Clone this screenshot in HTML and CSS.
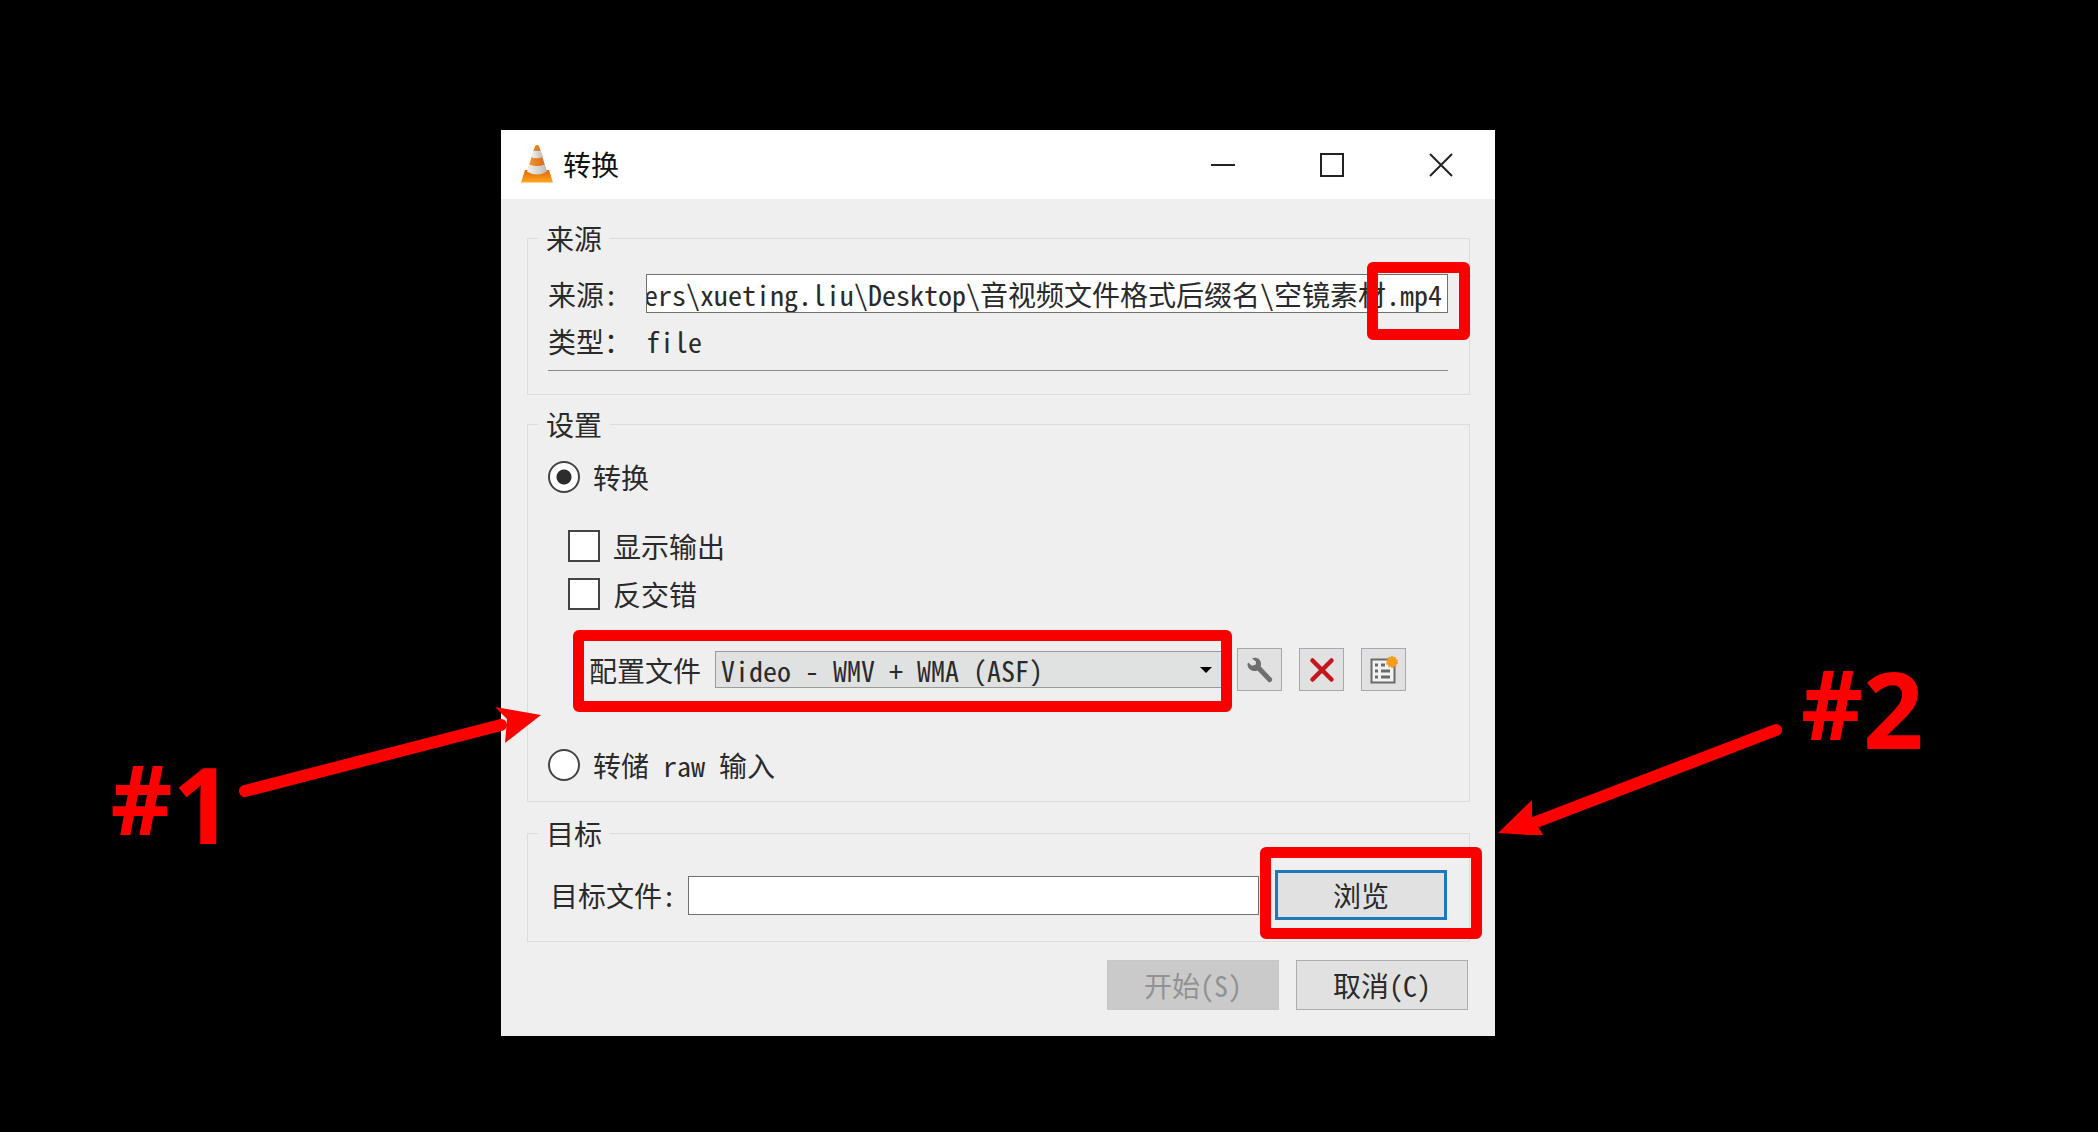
FILE: index.html
```html
<!DOCTYPE html>
<html lang="zh-CN">
<head>
<meta charset="utf-8">
<title>转换</title>
<link rel="stylesheet" href="styles.css">
</head>
<body>
<main class="stage">
  <form class="dialog">
    <header class="titlebar">
      <svg class="cone" width="34" height="40" viewBox="0 0 34 40" aria-hidden="true">
        <defs>
          <linearGradient id="base" x1="0" y1="0" x2="0" y2="1"><stop offset="0" stop-color="#dd650c"/><stop offset="1" stop-color="#ffa81c"/></linearGradient>
          <linearGradient id="body" x1="0" y1="0" x2="1" y2="0"><stop offset="0" stop-color="#f09a3c"/><stop offset="1" stop-color="#d9640f"/></linearGradient>
          <linearGradient id="band" x1="0" y1="0" x2="1" y2="0"><stop offset="0" stop-color="#f4f4f2"/><stop offset="1" stop-color="#bdbcb8"/></linearGradient>
        </defs>
        <path d="M5 25h24l4 12.500H1z" fill="url(#base)"/>
        <path d="M15 1q2-2 4 0l8 26q-10 6-20 0z" fill="url(#body)"/>
        <path d="M13.300 6h7.400l2.200 6q-6 2.500-11.800 0z" fill="url(#band)"/>
        <path d="M9.500 19.500q7.500 3 15 0l2.500 7q-10 6-20 0z" fill="url(#band)"/>
      </svg>
      <h1 class="title">转换</h1>
      <button class="winbtn" type="button" aria-label="最小化"><svg width="24" height="24" viewBox="0 0 24 24"><path d="M0 12h24"/></svg></button>
      <button class="winbtn" type="button" aria-label="最大化"><svg width="24" height="24" viewBox="0 0 24 24"><path d="M1 1h22v22H1z"/></svg></button>
      <button class="winbtn" type="button" aria-label="关闭"><svg width="24" height="24" viewBox="0 0 24 24"><path d="M1 1l22 22M23 1L1 23"/></svg></button>
    </header>

    <div class="content">
      <fieldset class="group source">
        <legend>来源</legend>
        <div class="row">
          <label class="name" for="src">来源:</label>
          <div class="path">
            <input class="text" id="src" type="text" readonly value="ers\xueting.liu\Desktop\音视频文件格式后缀名\空镜素材.mp4">
            <span class="mark mark-ext"></span>
          </div>
        </div>
        <div class="row kind">
          <span class="name">类型：</span>
          <span>file</span>
        </div>
        <hr class="rule">
      </fieldset>

      <fieldset class="group settings">
        <legend>设置</legend>
        <label class="option"><input class="radio" type="radio" name="mode" checked>转换</label>
        <div class="checks">
          <label class="option"><input class="check" type="checkbox">显示输出</label>
          <label class="option"><input class="check" type="checkbox">反交错</label>
        </div>
        <div class="profile">
          <div class="chooser">
            <label for="profile">配置文件</label>
            <div class="drop">
              <select id="profile"><option>Video - WMV + WMA (ASF)</option></select>
              <svg class="caret" width="12" height="6" viewBox="0 0 12 6" aria-hidden="true"><path d="M0 0h12L6 6z"/></svg>
            </div>
            <span class="mark mark-profile"></span>
          </div>
          <div class="tools">
            <button class="tool" type="button" aria-label="编辑"><svg width="26" height="26" viewBox="0 0 26 26"><path d="M5 1.500C8-.5 14 1 14 7c0 1-.2 1.700-.3 2.400L25 21.500Q26 25 22 25.500L10.500 13.500C6 15.500.5 12.500.5 7l.6-1.500L5 8.800 8.800 7.600 9 4.500z" fill="#6f6f6f"/></svg></button>
            <button class="tool" type="button" aria-label="删除"><svg width="26" height="26" viewBox="0 0 26 26"><path d="M3.500 3.500l19 19M22.500 3.500l-19 19" stroke="#c4161c" stroke-width="4.500" stroke-linecap="round"/></svg></button>
            <button class="tool" type="button" aria-label="新建"><svg width="28" height="28" viewBox="0 0 28 28"><path d="M1.500 3.500h23v23h-23z" fill="#f2f2f2" stroke="#6a6a6a" stroke-width="2"/><path d="M5 9h3M5 15h3M5 21h3M11 9h4M11 15h9M11 21h9" stroke="#6a6a6a" stroke-width="3"/><circle cx="22" cy="6" r="5" fill="#f59c25"/><circle cx="22" cy="6" r="5" fill="none" stroke="#f59c25" stroke-width="2" stroke-dasharray="2 1.140"/></svg></button>
          </div>
        </div>
        <label class="option"><input class="radio" type="radio" name="mode">转储 raw 输入</label>
      </fieldset>

      <fieldset class="group target">
        <legend>目标</legend>
        <div class="row dest">
          <label for="dst">目标文件:</label>
          <input class="text" id="dst" type="text">
          <div class="browse">
            <button class="push default" type="button">浏览</button>
            <span class="mark mark-browse"></span>
          </div>
        </div>
      </fieldset>

      <footer class="actions">
        <button class="push" type="button" disabled>开始(S)</button>
        <button class="push" type="button">取消(C)</button>
      </footer>
    </div>

    <div class="note note-one">
      <p class="number"><span class="hash">#</span>1</p>
      <svg class="arrow" width="304" height="100" viewBox="0 0 304 100" aria-hidden="true"><path d="M8 87L264 21" fill="none" stroke="#f00" stroke-width="12" stroke-linecap="round"/><path d="M304 11L258 3l12 12-2 24z" fill="#f00"/></svg>
    </div>
    <div class="note note-two">
      <svg class="arrow" width="286" height="112" viewBox="0 0 286 112" aria-hidden="true"><path d="M278 7L38 99" fill="none" stroke="#f00" stroke-width="12" stroke-linecap="round"/><path d="M0 110L34 77v16l6 11 6 9z" fill="#f00"/></svg>
      <p class="number"><span class="hash">#</span>2</p>
    </div>
  </form>
</main>
</body>
</html>
```
FILE: styles.css
```css
* { box-sizing: border-box; }

body {
  margin: 0;
  min-height: 100vh;
  background: #000;
  color: #2a2a2a;
  font: 300 28px/32px "Noto Sans Mono CJK SC", "Noto Sans CJK SC", sans-serif;
  font-feature-settings: "hwid";
}

input, select, button { font: inherit; color: inherit; font-feature-settings: inherit; }
h1, p { margin: 0; font-weight: inherit; }

.stage {
  display: grid;
  grid-template-columns: 501fr 994fr 603fr;
  padding: 130px 0 96px;
  overflow: hidden;
}

.dialog {
  grid-column: 2;
  position: relative;
  min-width: 0;
  background: #efefef;
}

/* Title bar */
.titlebar {
  display: flex;
  align-items: center;
  height: 69px;
  padding-left: 19px;
  background: #fff;
}
.cone { display: block; }
.title {
  flex: 1;
  padding: 0 0 2px 9px;
  color: #111;
  font: 400 28px/32px "Noto Sans CJK SC", sans-serif;
}
.winbtn {
  display: grid;
  place-items: center;
  width: 109px;
  height: 69px;
  padding: 0;
  border: 0;
  background: none;
}
.winbtn svg { fill: none; stroke: #222; stroke-width: 2; }

/* Groups */
.content { padding: 23px 25px 26px 26px; }
.group {
  min-width: 0;
  margin: 0;
  padding: 20px 21px 20px 20px;
  border: 1px solid #dcdcdc;
}
.group legend {
  margin-left: -10px;
  padding: 0 8px;
}
.source { padding-bottom: 23px; }
.settings { margin-top: 13px; padding-top: 21px; }
.target { margin-top: 15px; padding: 21px 22px 21px 20px; }

.row { display: flex; align-items: center; }
.name { width: 98px; }
.kind { margin-top: 12px; }
.rule {
  height: 1px;
  margin: 13px 0 0;
  border: 0;
  background: #8a8a8a;
}
.path { flex: 1; position: relative; display: flex; min-width: 0; }
.text {
  flex: 1;
  min-width: 0;
  height: 39px;
  padding: 0;
  border: 1px solid #707070;
  border-radius: 0;
  background: #fff;
  outline: 0;
}
.path .text { text-indent: -3px; }

/* Options */
.option { display: flex; align-items: center; }
.radio, .check {
  appearance: none;
  width: 32px;
  height: 32px;
  margin: 0 13px 0 0;
  border: 2px solid #444;
  background: #fff;
}
.radio { border-radius: 50%; }
.radio:checked { background: radial-gradient(circle, #2d2d2d 7px, #fff 8px); }
.checks {
  display: grid;
  gap: 16px;
  padding: 37px 0 38px 20px;
}

/* Profile line */
.profile {
  display: flex;
  align-items: center;
  gap: 10px;
  padding: 0 42px 58px 41px;
}
.chooser {
  flex: 1;
  position: relative;
  display: flex;
  align-items: center;
  gap: 14px;
  min-width: 0;
}
.drop { flex: 1; position: relative; min-width: 0; }
.drop select {
  display: block;
  appearance: none;
  width: 100%;
  height: 37px;
  padding: 0 24px 0 5px;
  border: 1px solid #9a9a9a;
  border-radius: 0;
  background: #e0e1e1;
}
.caret { position: absolute; right: 15px; top: 16px; }
.tools { display: flex; gap: 17px; }
.tool {
  display: grid;
  place-items: center;
  width: 45px;
  height: 43px;
  padding: 0;
  border: 1px solid #a5a9ae;
  background: #e1e1e1;
}
.tool svg { display: block; fill: none; }

/* Push buttons */
.push {
  width: 172px;
  height: 50px;
  padding: 0;
  border: 1px solid #adadad;
  border-radius: 0;
  background: #e1e1e1;
}
.push:disabled { border-color: #c6c6c6; background: #cacaca; color: #929292; }
.push.default { border: 3px solid #1f78b8; }
.dest { padding-left: 2px; }
.dest .text { margin: 0 16px 0 12px; }
.browse { position: relative; display: flex; }
.actions {
  display: flex;
  justify-content: flex-end;
  gap: 17px;
  padding: 18px 2px 0 0;
}

/* Red annotations */
.mark {
  position: absolute;
  border: 11px solid #f80000;
  border-radius: 6px;
  pointer-events: none;
}
.mark-ext { top: -12px; right: -22px; width: 103px; height: 78px; }
.mark-profile { inset: -21px -5px -24px -16px; }
.mark-browse { inset: -23px -35px -19px -15px; }

.note { position: absolute; display: flex; pointer-events: none; }
.note-one { top: 574px; right: calc(100% - 40px); gap: 4px; }
.note-two { top: 525px; left: calc(100% + 3px); gap: 17px; }
.note-two .arrow { margin-top: 68px; }
.number {
  display: flex;
  align-items: flex-start;
  color: #f00;
  font: 700 106px/1 "Open Sans", sans-serif;
  font-feature-settings: normal;
}
.note-one .number { margin-top: 46px; }
.hash { font-size: 96px; }
```
